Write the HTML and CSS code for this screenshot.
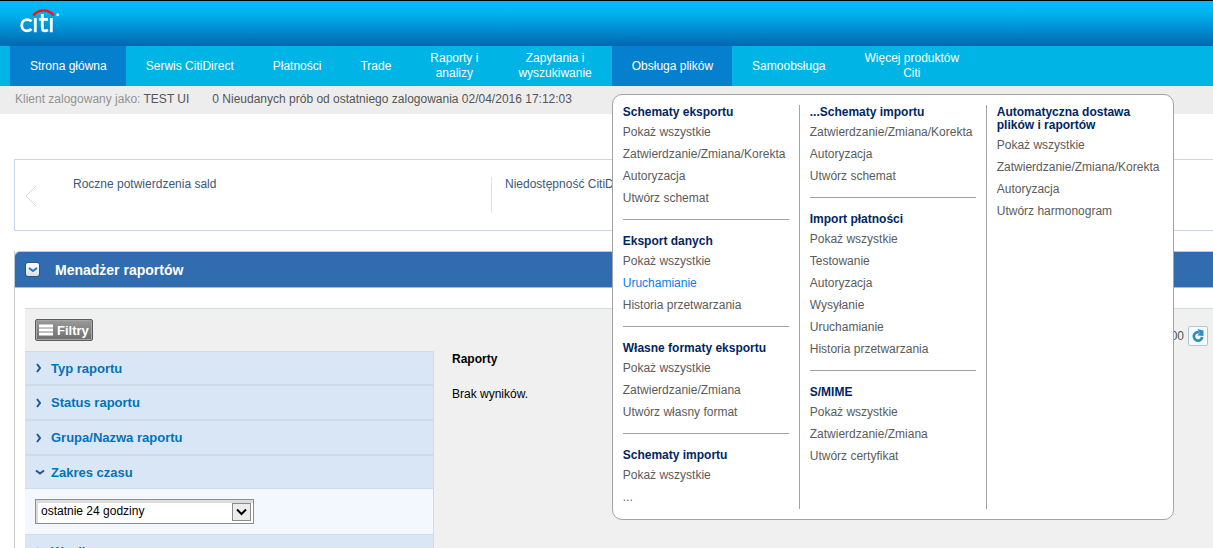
FILE: index.html
```html
<!DOCTYPE html>
<html lang="pl">
<head>
<meta charset="utf-8">
<title>CitiDirect</title>
<link rel="stylesheet" href="styles.css">
</head>
<body>
<header class="brand">
  <svg class="logo" viewBox="0 0 42 26" role="img" aria-label="citi">
    <g fill="none" stroke="#fff" stroke-width="2.800">
      <path d="M12.500 12.300C11 11 9.600 10.600 8 10.600C5 10.600 2.700 12.900 2.700 16.200C2.700 19.500 5 21.800 8 21.800C9.800 21.800 11.200 21.200 12.500 19.900"/>
      <path d="M16.300 9V23.200M32.300 9V23.200"/>
      <path d="M23.300 5V18.800C23.300 21.200 24.400 21.900 25.900 21.900C27.200 21.900 28 21.500 29 20.900M20.300 10.400H29"/>
    </g>
    <path d="M14.300 6.500C19-.2 30-.2 34.700 6.500" fill="none" stroke="#f5141c" stroke-width="2.400"/>
    <circle cx="38.700" cy="5.700" r="1.500" fill="#d5efff"/>
  </svg>
</header>
<nav class="nav">
  <ul class="nav-list">
    <li class="nav-item"><a class="nav-link active" href="#">Strona główna</a></li>
    <li class="nav-item"><a class="nav-link" href="#">Serwis CitiDirect</a></li>
    <li class="nav-item"><a class="nav-link" href="#">Płatności</a></li>
    <li class="nav-item"><a class="nav-link" href="#">Trade</a></li>
    <li class="nav-item"><a class="nav-link two-line" href="#">Raporty i<br>analizy</a></li>
    <li class="nav-item"><a class="nav-link two-line" href="#">Zapytania i<br>wyszukiwanie</a></li>
    <li class="nav-item"><a class="nav-link active" href="#">Obsługa plików</a>
      <div class="menu">
        <div class="menu-col">
          <section class="group">
            <h3>Schematy eksportu</h3>
            <a href="#">Pokaż wszystkie</a>
            <a href="#">Zatwierdzanie/Zmiana/Korekta</a>
            <a href="#">Autoryzacja</a>
            <a href="#">Utwórz schemat</a>
          </section>
          <section class="group">
            <h3>Eksport danych</h3>
            <a href="#">Pokaż wszystkie</a>
            <a class="hot" href="#">Uruchamianie</a>
            <a href="#">Historia przetwarzania</a>
          </section>
          <section class="group">
            <h3>Własne formaty eksportu</h3>
            <a href="#">Pokaż wszystkie</a>
            <a href="#">Zatwierdzanie/Zmiana</a>
            <a href="#">Utwórz własny format</a>
          </section>
          <section class="group">
            <h3>Schematy importu</h3>
            <a href="#">Pokaż wszystkie</a>
            <a href="#">...</a>
          </section>
        </div>
        <div class="menu-col">
          <section class="group">
            <h3>...Schematy importu</h3>
            <a href="#">Zatwierdzanie/Zmiana/Korekta</a>
            <a href="#">Autoryzacja</a>
            <a href="#">Utwórz schemat</a>
          </section>
          <section class="group">
            <h3>Import płatności</h3>
            <a href="#">Pokaż wszystkie</a>
            <a href="#">Testowanie</a>
            <a href="#">Autoryzacja</a>
            <a href="#">Wysyłanie</a>
            <a href="#">Uruchamianie</a>
            <a href="#">Historia przetwarzania</a>
          </section>
          <section class="group">
            <h3>S/MIME</h3>
            <a href="#">Pokaż wszystkie</a>
            <a href="#">Zatwierdzanie/Zmiana</a>
            <a href="#">Utwórz certyfikat</a>
          </section>
        </div>
        <div class="menu-col">
          <section class="group">
            <h3>Automatyczna dostawa plików i raportów</h3>
            <a href="#">Pokaż wszystkie</a>
            <a href="#">Zatwierdzanie/Zmiana/Korekta</a>
            <a href="#">Autoryzacja</a>
            <a href="#">Utwórz harmonogram</a>
          </section>
        </div>
      </div>
    </li>
    <li class="nav-item"><a class="nav-link" href="#">Samoobsługa</a></li>
    <li class="nav-item"><a class="nav-link two-line" href="#">Więcej produktów<br>Citi</a></li>
  </ul>
</nav>
<div class="status">
  <span><span class="muted">Klient zalogowany jako:</span> TEST UI</span>
  <span>0 Nieudanych prób od ostatniego zalogowania 02/04/2016 17:12:03</span>
</div>
<main class="content">
  <section class="news">
    <button class="prev" type="button" aria-label="Poprzednie">
      <svg width="12" height="22" viewBox="0 0 12 22"><path d="M11 1L1 11L11 21" fill="none" stroke="#d8d8d8"/></svg>
    </button>
    <a class="news-item" href="#">Roczne potwierdzenia sald</a>
    <a class="news-item" href="#">Niedostępność CitiDirect</a>
  </section>
  <section class="panel">
    <header class="panel-head">
      <button class="toggle" type="button" aria-label="Zwiń">
        <svg width="10" height="6" viewBox="0 0 10 6"><path d="M1 1L5 4L9 1" fill="none" stroke="#1b74d8" stroke-width="2"/></svg>
      </button>
      <h2>Menadżer raportów</h2>
    </header>
    <div class="panel-body">
      <div class="toolbar">
        <button class="filter-btn" type="button">
          <svg width="14" height="12" viewBox="0 0 14 12"><path d="M0 2H14M0 6H14M0 10H14" stroke="#fff" stroke-width="3"/></svg>
          Filtry
        </button>
        <div class="refresh-wrap">
          <span>17:14:00</span>
          <button class="refresh" type="button" aria-label="Odśwież">
            <svg width="14" height="14" viewBox="0 0 14 14"><path d="M8 3.300A4.200 4.200 0 1 0 11.200 8" fill="none" stroke="#2b8fc9" stroke-width="2.800"/><path d="M6.500 0L12.500 1.500V7L6.500 6.500L8.500 4Z" fill="#2b8fc9"/></svg>
          </button>
        </div>
      </div>
      <div class="split">
        <aside class="filters">
          <button class="filter" type="button"><svg width="10" height="10" viewBox="0 0 10 10"><path d="M2 1L5 5L2 9" fill="none" stroke="#1f5796" stroke-width="2"/></svg>Typ raportu</button>
          <button class="filter" type="button"><svg width="10" height="10" viewBox="0 0 10 10"><path d="M2 1L5 5L2 9" fill="none" stroke="#1f5796" stroke-width="2"/></svg>Status raportu</button>
          <button class="filter" type="button"><svg width="10" height="10" viewBox="0 0 10 10"><path d="M2 1L5 5L2 9" fill="none" stroke="#1f5796" stroke-width="2"/></svg>Grupa/Nazwa raportu</button>
          <button class="filter open" type="button"><svg width="10" height="10" viewBox="0 0 10 10"><path d="M1 3.500L5 6.500L9 3.500" fill="none" stroke="#1f5796" stroke-width="2"/></svg>Zakres czasu</button>
          <div class="filter-body">
            <div class="select-wrap">
              <select class="select" aria-label="Zakres czasu"><option>ostatnie 24 godziny</option></select>
              <svg class="arrow" width="19" height="18" viewBox="0 0 19 18" aria-hidden="true"><rect x=".5" y=".5" width="18" height="17" fill="#ececec" stroke="#8a8a8a"/><path d="M5 6.500L9.500 11L14 6.500" fill="none" stroke="#000" stroke-width="2"/></svg>
            </div>
          </div>
          <button class="filter" type="button"><svg width="10" height="10" viewBox="0 0 10 10"><path d="M2 1L5 5L2 9" fill="none" stroke="#1f5796" stroke-width="2"/></svg>Wynik</button>
        </aside>
        <section class="results">
          <h3>Raporty</h3>
          <p>Brak wyników.</p>
        </section>
      </div>
    </div>
  </section>
</main>
</body>
</html>
```
FILE: styles.css
```css
* { box-sizing: border-box; }
html { height: 100%; overflow: hidden; }
body {
  margin: 0;
  height: 100%;
  overflow: hidden;
  background: #fff;
  color: #000;
  font: 12px/15px "Liberation Sans", Arial, sans-serif;
}
h2, h3, p, ul { margin: 0; padding: 0; }
a { color: inherit; text-decoration: none; }
button { font: inherit; padding: 0; border: 0; background: none; }
svg { display: block; flex: none; }

.brand {
  height: 46px;
  padding: 8px 19px;
  border-top: 1px solid #000;
  background: linear-gradient(#00bdf7, #00b4f0 25%, #0067b1);
}
.logo { width: 42px; height: 26px; }

.nav { background: #00b4e6; padding-left: 10px; }
.nav-list { display: flex; list-style: none; height: 40px; }
.nav-item { position: relative; display: flex; }
.nav-link {
  display: flex;
  align-items: center;
  padding: 0 19px 0 20px;
  color: #fff;
  text-align: center;
  white-space: nowrap;
}
.nav-link.two-line { padding: 0 20px; }
.nav-link.active { background: #0480cf; }

.menu {
  position: absolute;
  z-index: 5;
  top: 48px;
  left: 0;
  display: grid;
  grid-template-columns: 187px 187px 186px;
  padding: 10px 0;
  border: 1px solid #a3a3a3;
  border-radius: 10px;
  background: #fff;
}
.menu-col { padding: 0 10px 1px; border-right: 1px solid #a3a3a3; }
.menu-col:last-child { border-right: 0; }
.group + .group { margin-top: 10px; padding-top: 14px; border-top: 1px solid #a3a3a3; }
.group h3 { padding-top: 1px; margin-bottom: 2px; color: #002663; font-size: 12px; line-height: 13px; }
.group a { display: block; color: #5b5b5b; line-height: 22px; white-space: nowrap; }
.group .hot { color: #0480f0; }

.status {
  display: flex;
  gap: 23px;
  padding: 6px 15px 7px;
  background: #ededed;
  color: #555;
}
.muted { color: #929292; }

.content { padding: 45px 0 0 14px; }
.news {
  display: flex;
  align-items: flex-start;
  height: 72px;
  padding: 17px 0 0 10px;
  border: 1px solid #c5d6ee;
  border-right: 0;
}
.prev { margin: 8px 36px 0 0; }
.news-item { width: 418px; height: 36px; color: #3b5979; }
.news-item + .news-item { padding-left: 13px; border-left: 1px solid #d9e3f3; }

.panel { margin-top: 20px; border-left: 1px solid #cacaca; }
.panel-head {
  display: flex;
  align-items: center;
  gap: 15px;
  height: 37px;
  margin-left: -1px;
  padding-left: 10px;
  border-top: 1px solid #bfc6cc;
  border-bottom: 1px solid #9dbde0;
  border-left: 1px solid #bfc6cc;
  border-radius: 6px 0 0 0;
  background: #316cb1;
  color: #fff;
}
.panel-head h2 { font-size: 14px; line-height: 18px; }
.toggle {
  display: grid;
  place-items: center;
  width: 15px;
  height: 15px;
  border: 1px solid #24588f;
  border-radius: 3px;
  background: linear-gradient(#fff, #dedede);
}
.panel-body { margin: 20px 0 0 10px; border-top: 1px solid #cddce6; background: #f0f0f0; min-height: 300px; }
.toolbar { display: flex; justify-content: space-between; height: 42px; padding: 10px 5px 0 10px; }
.filter-btn {
  display: flex;
  align-items: center;
  gap: 4px;
  width: 58px;
  height: 22px;
  padding: 0 3px;
  border: 1px solid #5c5c5c;
  border-radius: 2px;
  background: linear-gradient(#9a9a9a, #6e6e6e);
  box-shadow: inset 0 0 0 1px #a6a6a6;
  color: #fff;
  font-size: 13px;
  font-weight: bold;
}
.refresh-wrap { display: flex; align-items: center; gap: 4px; height: 34px; color: #555; }
.refresh {
  display: grid;
  place-items: center;
  width: 20px;
  height: 20px;
  border: 1px solid #a4c9de;
  border-radius: 2px;
  background: #f7fbfd;
}

.split { display: flex; }
.filters { width: 409px; border-right: 1px solid #cddce6; background: #d9e6f5; }
.filter {
  display: flex;
  align-items: center;
  gap: 6px;
  width: 100%;
  height: 35px;
  padding-left: 10px;
  border-top: 1px solid #cddce6;
  border-bottom: 1px solid #cddce6;
  color: #0073bd;
  font-size: 13px;
  font-weight: bold;
}
.filter:first-child, .filter.open { height: 34px; }
.filter-body { padding: 10px; background: #f3f7fe; }
.select-wrap { display: grid; width: 219px; }
.select {
  grid-area: 1 / 1;
  height: 25px;
  padding: 0 24px 0 5px;
  border: 1px solid #8e8e8e;
  border-radius: 0;
  background: #fff;
  box-shadow: inset 1px 2px 0 1px #dcdcdc;
  color: #000;
  font: inherit;
  appearance: none;
}
.arrow { grid-area: 1 / 1; place-self: center end; margin-right: 3px; pointer-events: none; }
.results { padding: 1px 18px; }
.results h3 { font-size: 12px; margin-bottom: 20px; }
```
